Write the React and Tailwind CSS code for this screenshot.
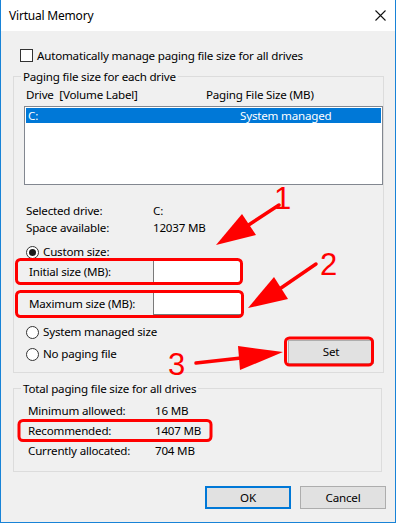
import React from "react";

function Radio({ checked }) {
  return (
    <span className="flex h-[13px] w-[13px] shrink-0 items-center justify-center rounded-full border border-[#333333] bg-white">
      {checked ? <span className="h-[7px] w-[7px] rounded-full bg-[#1a1a1a]" /> : null}
    </span>
  );
}

function Btn({ children, primary, className }) {
  return (
    <div
      className={
        "flex items-center justify-center bg-[#e1e1e1] text-black " +
        (primary ? "border-2 border-[#0078d7] " : "border border-[#adadad] ") +
        className
      }
    >
      {children}
    </div>
  );
}

export default function App() {
  return (
    <div
      className="relative h-[523px] w-[396px] overflow-hidden border-x border-b border-[#1883d7] bg-[#f0f0f0] text-[11.6px] leading-[16px] tracking-[-0.2px] text-black"
      style={{ fontFamily: '"Noto Sans", "Open Sans", sans-serif' }}
    >
      {/* Title bar */}
      <div className="flex h-[31px] items-center justify-between bg-white pl-[8px] pr-[9px]">
        <span className="text-[12px]">Virtual Memory</span>
        <svg width="11" height="11" viewBox="0 0 11 11" className="block">
          <path d="M0.5 0.5 L10.5 10.5 M10.5 0.5 L0.5 10.5" stroke="#111" strokeWidth="1.1" fill="none" />
        </svg>
      </div>

      <div className="pl-[12px]">
        {/* Checkbox row */}
        <div className="mt-[16px] flex h-[17px] items-center pl-[7px]">
          <span className="h-[13px] w-[13px] shrink-0 border border-[#333333] bg-white" />
          <span className="ml-[4px]">Automatically manage paging file size for all drives</span>
        </div>

        {/* Group 1 */}
        <fieldset className="mt-[5px] w-[369px] border border-[#dcdcdc] pb-[8px]">
          <legend className="ml-[7px] px-[2px] leading-[15px]">Paging file size for each drive</legend>
          <div className="mt-[3px] flex h-[16px] items-center pl-[12px]">
            <span className="w-[180px] whitespace-pre">Drive  [Volume Label]</span>
            <span>Paging File Size (MB)</span>
          </div>
          <div className="ml-[10px] mt-[3px] h-[79px] w-[359px] border border-[#828790] bg-white p-[1px]">
            <div className="flex h-[15px] items-center bg-[#0078d7] pl-[2px] text-white">
              <span className="w-[212px]">C:</span>
              <span>System managed</span>
            </div>
          </div>

          <div className="mt-[18px] flex h-[16px] items-center pl-[12px]">
            <span className="w-[127px]">Selected drive:</span>
            <span>C:</span>
          </div>
          <div className="mt-[1px] flex h-[16px] items-center pl-[12px]">
            <span className="w-[127px]">Space available:</span>
            <span>12037 MB</span>
          </div>

          <div className="mt-[8px] flex h-[16px] items-center pl-[12px]">
            <Radio checked />
            <span className="ml-[4px]">Custom size:</span>
          </div>
          <div className="flex h-[23px] items-center pl-[15px]">
            <span className="w-[124px]">Initial size (MB):</span>
            <div className="h-[23px] w-[89px] border border-[#7a7a7a] bg-white" />
          </div>
          <div className="mt-[9px] flex h-[23px] items-center pl-[15px]">
            <span className="w-[124px]">Maximum size (MB):</span>
            <div className="h-[23px] w-[89px] border border-[#7a7a7a] bg-white" />
          </div>

          <div className="mt-[9px] flex h-[40px] justify-between pl-[12px] pr-[9px]">
            <div className="flex flex-col gap-[6px]">
              <div className="flex h-[16px] items-center">
                <Radio />
                <span className="ml-[4px]">System managed size</span>
              </div>
              <div className="flex h-[16px] items-center">
                <Radio />
                <span className="ml-[4px]">No paging file</span>
              </div>
            </div>
            <Btn className="h-[24px] w-[86px] self-end">Set</Btn>
          </div>
        </fieldset>

        {/* Group 2 */}
        <fieldset className="mt-[8px] w-[369px] border border-[#dcdcdc] pb-[12px]">
          <legend className="ml-[7px] px-[2px] leading-[15px]">Total paging file size for all drives</legend>
          <div className="mt-[7px] flex h-[16px] items-center pl-[14px]">
            <span className="w-[127px]">Minimum allowed:</span>
            <span>16 MB</span>
          </div>
          <div className="mt-[4px] flex h-[16px] items-center pl-[14px]">
            <span className="w-[127px]">Recommended:</span>
            <span>1407 MB</span>
          </div>
          <div className="mt-[4px] flex h-[16px] items-center pl-[14px]">
            <span className="w-[127px]">Currently allocated:</span>
            <span>704 MB</span>
          </div>
        </fieldset>

        {/* Buttons */}
        <div className="mt-[14px] flex w-[373px] justify-end gap-[9px]">
          <Btn primary className="h-[23px] w-[86px]">OK</Btn>
          <Btn className="h-[23px] w-[86px]">Cancel</Btn>
        </div>
      </div>

      {/* Annotations overlay */}
      <svg
        className="pointer-events-none absolute left-0 top-0"
        width="396"
        height="523"
        viewBox="0 0 396 523"
      >
        <g fill="none" stroke="#ff0000" strokeWidth="3">
          <rect x="15.5" y="259.5" width="225" height="24" rx="4" />
          <rect x="15.5" y="291.5" width="226" height="25" rx="4" />
          <rect x="284.5" y="338" width="87" height="27" rx="4" />
          <rect x="18" y="420.5" width="192" height="20" rx="4" />
        </g>
        <g stroke="#ff0000" strokeWidth="3.5" strokeLinecap="round">
          <line x1="278" y1="205" x2="246" y2="226" />
          <line x1="315" y1="264" x2="280" y2="288" />
          <line x1="195" y1="363" x2="240" y2="358" />
        </g>
        <g fill="#ff0000">
          <polygon points="215,245 241,214 255,235" />
          <polygon points="247,308 273,277 287,299" />
          <polygon points="282,352 237,346 239,370" />
        </g>
        <g fill="#ff0000" style={{ fontFamily: '"Liberation Sans", Arial, sans-serif' }} fontSize="31">
          <text x="273" y="208.5">1</text>
          <text x="319" y="275">2</text>
          <text x="167" y="375">3</text>
        </g>
      </svg>
    </div>
  );
}
